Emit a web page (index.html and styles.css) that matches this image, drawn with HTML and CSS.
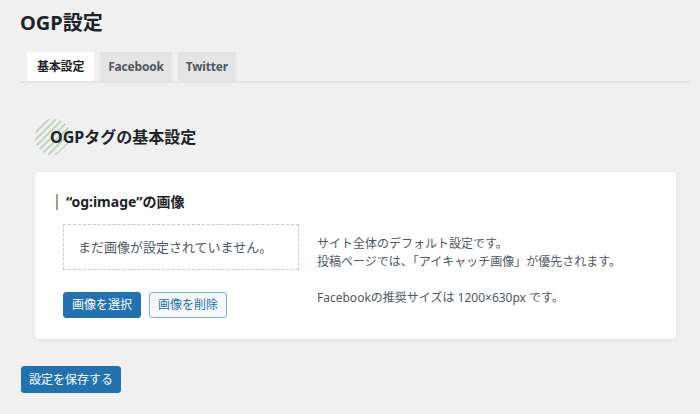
FILE: index.html
```html
<!DOCTYPE html>
<html lang="ja">
<head>
<meta charset="utf-8">
<title>OGP設定</title>
<link rel="stylesheet" href="styles.css">
</head>
<body>
<div class="wrap">
  <h1 class="page-title">OGP設定</h1>
  <nav class="tabs">
    <a class="tab is-active">基本設定</a>
    <a class="tab">Facebook</a>
    <a class="tab">Twitter</a>
  </nav>
  <h2 class="section-title">OGPタグの基本設定</h2>
  <div class="card">
    <h3 class="field-title">“og:image”の画像</h3>
    <div class="field-body">
      <div class="media">
        <div class="media-preview">まだ画像が設定されていません。</div>
        <div class="media-actions">
          <button class="btn btn-primary">画像を選択</button>
          <button class="btn btn-secondary">画像を削除</button>
        </div>
      </div>
      <p class="field-desc">サイト全体のデフォルト設定です。<br>投稿ページでは、「アイキャッチ画像」が優先されます。<br><br>Facebookの推奨サイズは 1200×630px です。</p>
    </div>
  </div>
  <button class="btn btn-primary btn-save">設定を保存する</button>
</div>
</body>
</html>
```
FILE: styles.css
```css
* { box-sizing: border-box; }
html, body { margin: 0; padding: 0; }
body {
  background: #f0f0f1;
  color: #1d2327;
  font-family: "Noto Sans", "Noto Sans CJK JP", sans-serif;
  font-size: 13px;
}
.wrap {
  padding: 0 10px 0 20px;
}
.page-title {
  margin: 0;
  padding-top: 9px;
  font-size: 20px;
  line-height: 28px;
  font-weight: 700;
  color: #1d2327;
}
.tabs {
  display: flex;
  gap: 6px;
  margin-top: 15px;
  padding-left: 7px;
  border-bottom: 2px solid #e5e5e6;
}
.tab {
  display: block;
  height: 29px;
  padding: 0 8px;
  line-height: 29px;
  font-size: 12px;
  letter-spacing: -0.2px;
  font-weight: 700;
  color: #50575e;
  background: #e4e4e5;
  text-decoration: none;
}
.tab.is-active {
  padding: 0 10px;
  background: #ffffff;
  color: #1d2327;
}
.section-title {
  position: relative;
  margin: 36px 0 0 15px;
  padding-left: 15px;
  font-size: 16px;
  line-height: 36px;
  height: 36px;
  font-weight: 700;
  color: #1d2327;
  z-index: 0;
}
.section-title::before {
  content: "";
  position: absolute;
  left: 0;
  top: 0;
  width: 36px;
  height: 36px;
  border-radius: 50%;
  background: repeating-linear-gradient(-45deg, #c5d6c5 0 2px, transparent 2px 5px);
  z-index: -1;
}
.card {
  margin: 17px 14px 0 15px;
  padding: 22px 20px 21px 21px;
  background: #ffffff;
  border-radius: 4px;
  box-shadow: 0 1px 4px rgba(0, 0, 0, 0.08);
}
.field-title {
  margin: 0;
  padding-left: 8px;
  border-left: 2px solid #8aa88a;
  font-size: 14px;
  line-height: 16px;
  font-weight: 700;
  color: #1d2327;
}
.field-body {
  display: flex;
  gap: 18px;
  margin-top: 14px;
  padding-left: 7px;
}
.media {
  width: 236px;
  flex: none;
}
.media-preview {
  height: 46px;
  padding: 0 14px;
  line-height: 44px;
  border: 1px dashed #c8c9cc;
  color: #50575e;
  font-size: 13px;
}
.media-actions {
  display: flex;
  gap: 8px;
  margin-top: 22px;
}
.btn {
  font-family: inherit;
  font-size: 12px;
  height: 26px;
  line-height: 24px;
  padding: 0 8px;
  border-radius: 3px;
  cursor: pointer;
}
.btn-primary {
  background: #2271b1;
  border: 1px solid #2271b1;
  color: #ffffff;
}
.btn-secondary {
  background: #f6f7f7;
  border: 1px solid #72aee6;
  color: #2271b1;
}
.field-desc {
  margin: 11px 0 0;
  font-size: 12px;
  line-height: 18px;
  color: #50575e;
}
.btn-save {
  margin-top: 27px;
  height: 27px;
  padding: 0 7px;
  margin-left: 1px;
}
```
